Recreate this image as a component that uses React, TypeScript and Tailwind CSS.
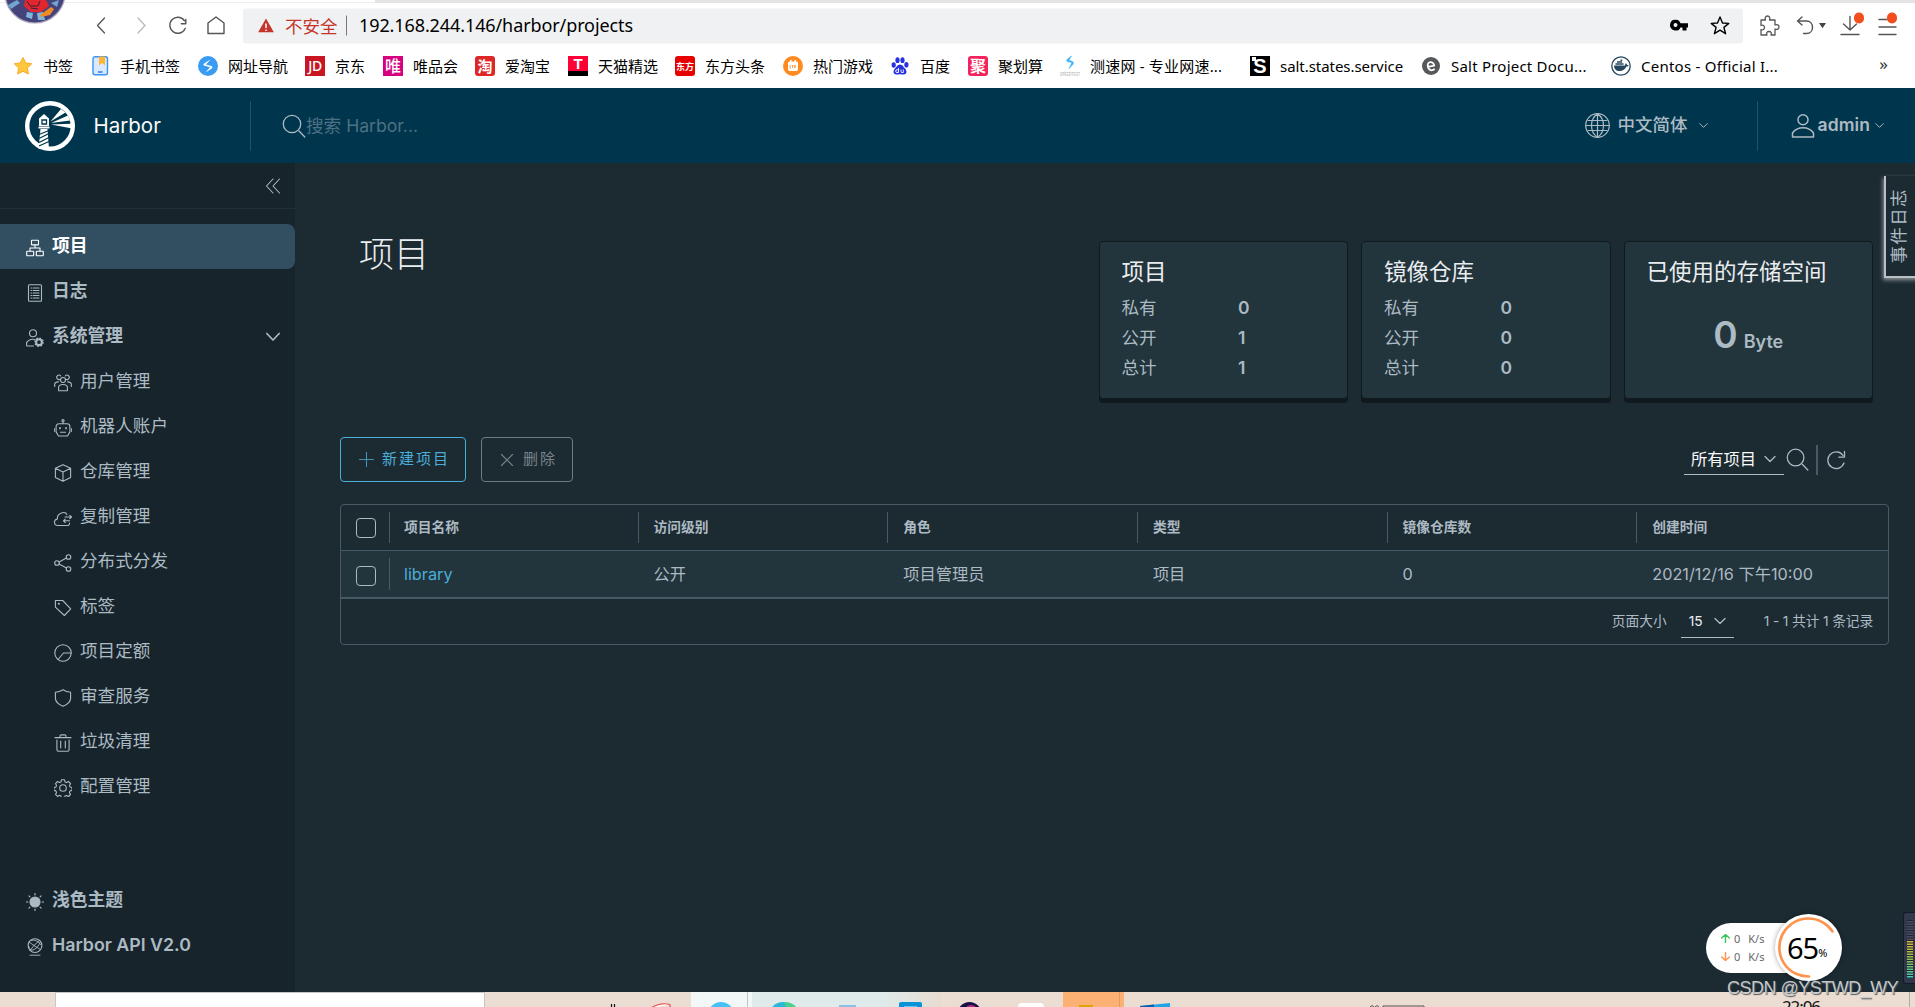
import type { ReactNode } from 'react';

/* ---------- icons ---------- */

function Line({ children, className, box = 18, width = 1.1 }: { children: ReactNode; className: string; box?: number; width?: number }) {
  return (
    <svg
      viewBox={`0 0 ${box} ${box}`}
      className={`shrink-0 ${className}`}
      fill="none"
      stroke="currentColor"
      strokeWidth={width}
      strokeLinejoin="round"
      strokeLinecap="round"
    >
      {children}
    </svg>
  );
}

const icons = {
  projects: (
    <>
      <rect x="5.5" y="1.3" width="7" height="4.6" rx="0.5" />
      <rect x="0.7" y="12.2" width="7" height="4.6" rx="0.5" />
      <rect x="10.3" y="12.2" width="7" height="4.6" rx="0.5" />
      <path d="M9 6v3M4 12V9h10v3" />
    </>
  ),
  logs: (
    <>
      <rect x="2.5" y="0.7" width="13" height="16.6" rx="1" />
      <path d="M5 4h.6M7.2 4h5.8M5 6.5h.6M7.2 6.5h5.8M5 9h.6M7.2 9h5.8M5 11.5h.6M7.2 11.5h5.8M5 14h.6M7.2 14h5.8" strokeWidth="1.2" />
    </>
  ),
  admin: (
    <>
      <circle cx="7" cy="4.2" r="3.5" />
      <path d="M7.5 17H1.2a.6.6 0 0 1-.6-.6v-2.8C2 11.4 4.3 10.2 7 10.2c.8 0 1.5.1 2 .3" />
      <circle cx="13" cy="13.2" r="2.9" strokeWidth="2.1" />
      <circle cx="13" cy="13.2" r="4.2" strokeWidth="1.3" strokeDasharray="1.5 1.8" strokeLinecap="butt" />
    </>
  ),
  users: (
    <>
      <circle cx="9" cy="6" r="2.5" />
      <path d="M4.6 16.8v-3.3c0-1.9 2-3 4.4-3s4.4 1.1 4.4 3v3.3z" />
      <path d="M5.7 5.4A2.2 2.2 0 1 1 6.7 2M12.3 5.4A2.2 2.2 0 1 0 11.3 2M.7 12.5v-2.2c0-1.3 1.3-2.2 3.6-2.4M17.3 12.5v-2.2c0-1.3-1.3-2.2-3.6-2.4" />
    </>
  ),
  robot: (
    <>
      <path d="M9 4.5V3M5 4.8h8c1.8 0 2.9 1.1 2.9 2.9v5.2L13.5 17h-9l-2.4-4.1V7.7C2.1 5.9 3.2 4.8 5 4.8zM.3 9.5v3M17.7 9.5v3M6.5 13.3h5" />
      <circle cx="9" cy="1.7" r="1.1" />
      <path d="M6 8.8v.6M12 8.8v.6" strokeWidth="1.7" />
    </>
  ),
  box: <path d="M9 .8l7.6 3.5v9.2L9 17.2l-7.6-3.7V4.3zM1.4 4.3L9 8l7.6-3.7M9 8v9.2" />,
  replicate: (
    <>
      <path d="M15.5 14c.2 1.500-.8 2.500-2.300 2.500H4c-4.700 0-4.500-6-.7-6.400C2.9 3.300 11.600 2 12.900 5.600" />
      <path d="M11 8h6.500M15.800 6.300l1.700 1.700-1.700 1.700M15.600 11.800H9.500M11.200 10.100l-1.700 1.700 1.700 1.700" />
    </>
  ),
  share: (
    <>
      <circle cx="3" cy="9" r="2.3" />
      <circle cx="14.5" cy="3" r="2.3" />
      <circle cx="14.5" cy="15" r="2.3" />
      <path d="M5 8l7.5-4M5 10l7.5 4" />
    </>
  ),
  tag: (
    <>
      <path d="M1.4 1.5h7.3l8 8.4-6.3 6.6-9-8.3z" />
      <circle cx="4.8" cy="4.8" r=".5" />
    </>
  ),
  quota: (
    <>
      <circle cx="9" cy="9" r="8.2" />
      <path d="M4 15.5L9.5 9H17" />
    </>
  ),
  shield: <path d="M9 .8c2.3 1.6 4.8 2.4 7.6 2.5v6c0 3.7-3 6.1-7.6 8-4.6-1.9-7.6-4.3-7.6-8v-6C4.2 3.2 6.7 2.4 9 .8z" />,
  trash: <path d="M1 3.6h16M6 3.4V2.2C6 1.3 6.5.9 7.3.9h3.4c.8 0 1.3.4 1.3 1.3v1.2M2.9 6v9.5c0 1 .6 1.7 1.6 1.7h9c1 0 1.6-.7 1.6-1.7V6M6.7 7v7M11.3 7v7" />,
  gear: (
    <>
      <circle cx="9" cy="9" r="3.3" />
      <path d="M7.5.8h3l.6 2.2 1.4.6 2-1.1 2.1 2.1-1.1 2 .6 1.4 1.9.6v2.8l-2 .6-.6 1.5 1.1 2-2 2-2.1-1.1-1.4.6-.5 1.9h-3l-.6-2-1.4-.6-2 1.1-2-2 1-2-.6-1.5-2-.6V8.6l2-.6.6-1.4-1-2 2-2.1 2 1.1 1.4-.6z" />
    </>
  ),
  sun: (
    <>
      <circle cx="9" cy="9" r="5" fill="currentColor" />
      <path d="M9 .3v1.6M9 16.1v1.6M.3 9h1.6M16.1 9h1.6M2.9 2.9l1 1M14.1 14.1l1 1M15.1 2.9l-1 1M3.9 14.1l-1 1" />
    </>
  ),
  api: (
    <>
      <circle cx="9" cy="7.6" r="6.9" />
      <path d="M4 17.2h10M3 4l5 3.5 5.5-5M8 7.5l-4 5M8 7.5l6.5 4M3 8.5C2.5 11 5 13 8 11.5s5-4 6-7M5 2.5c3-1 7 0 9.5 4" strokeWidth=".9" />
    </>
  ),
};

const Chevron = ({ className }: { className: string }) => (
  <Line className={className} box={12} width={1.3}>
    <path d="M1 3.5l5 5 5-5" />
  </Line>
);

const SearchIcon = ({ className }: { className: string }) => (
  <Line className={className} box={24} width={1.3}>
    <circle cx="10" cy="10" r="8.7" />
    <path d="M17 17l5.8 6" />
  </Line>
);

/* ---------- browser ---------- */

const square = 'flex items-center justify-center w-5 h-5 shrink-0 text-white leading-none';

const bookmarks: { label: string; width: string; text?: string; icon: ReactNode }[] = [
  {
    label: '书签',
    width: 'w-[77px]',
    icon: (
      <svg viewBox="0 0 20 20" className="w-5 h-5">
        <path d="M10 1.5l2.7 5.4 6 .9-4.3 4.2 1 6L10 15.2 4.6 18l1-6L1.3 7.8l6-.9z" fill="#ffc83c" stroke="#f9a825" strokeWidth="1" strokeLinejoin="round" />
      </svg>
    ),
  },
  {
    label: '手机书签',
    width: 'w-[108px]',
    icon: (
      <svg viewBox="0 0 20 20" className="w-5 h-5">
        <rect x="3" y=".8" width="14.5" height="18" rx="2" fill="#d9e9ff" stroke="#3b93f5" strokeWidth="1.4" />
        <path d="M9 .5h6v9l-3-2.5L9 9.500z" fill="#ffb62e" />
        <path d="M8 16h4.5" stroke="#1a73e8" strokeWidth="1.4" />
      </svg>
    ),
  },
  {
    label: '网址导航',
    width: 'w-[107px]',
    icon: (
      <svg viewBox="0 0 20 20" className="w-5 h-5">
        <circle cx="10" cy="10" r="10" fill="#3a9bf4" />
        <path d="M12.5 3.5L6 7.5c-1 .8-.6 2 .6 2.3l5.4 1.4L7.5 16.5l6.3-4c1-.8.7-2-.5-2.4L8 8.6z" fill="#fff" />
      </svg>
    ),
  },
  { label: '京东', width: 'w-[78px]', icon: <span className={`${square} bg-[#c91623] text-[14px] font-medium tracking-[-0.5px]`}>JD</span> },
  { label: '唯品会', width: 'w-[92px]', icon: <span className={`${square} bg-[#d6007f] text-[16px] font-medium`}>唯</span> },
  { label: '爱淘宝', width: 'w-[93px]', icon: <span className={`${square} bg-[#dd2727] rounded-[3px] text-[15px] font-bold`}>淘</span> },
  {
    label: '天猫精选',
    width: 'w-[107px]',
    icon: <span className={`${square} bg-[#ff0036] border-b-[5px] border-black font-['Liberation_Sans',sans-serif] text-[15px] font-bold`}>T</span>,
  },
  { label: '东方头条', width: 'w-[108px]', icon: <span className={`${square} bg-[#e60000] rounded-[3px] text-[9px] font-bold`}>东方</span> },
  {
    label: '热门游戏',
    width: 'w-[107px]',
    icon: (
      <svg viewBox="0 0 20 20" className="w-5 h-5">
        <circle cx="10" cy="10" r="10" fill="#ff8a1f" />
        <path d="M5 7.5C5 6 6 5.5 7 5.5V4h1.5v1.5h3V4H13v1.5c1 0 2 .5 2 2V13c0 1.5-1 2-2 2H7c-1 0-2-.5-2-2z" fill="#fff" />
        <path d="M7 9v3h1M9.5 9v3M11 9l.8 3 .8-3" stroke="#ff8a1f" strokeWidth=".8" fill="none" />
      </svg>
    ),
  },
  {
    label: '百度',
    width: 'w-[78px]',
    icon: (
      <svg viewBox="0 0 20 20" className="w-5 h-5" fill="#2932e1">
        <ellipse cx="3.7" cy="9" rx="2.1" ry="2.8" />
        <ellipse cx="7.5" cy="4.2" rx="2.1" ry="2.9" />
        <ellipse cx="12.5" cy="4.2" rx="2.1" ry="2.9" />
        <ellipse cx="16.4" cy="8.8" rx="2.1" ry="2.8" />
        <path d="M10 8.5c2.5 0 3.2 2.3 5 4s2.5 6-1.5 6c-1.5 0-2.3-.3-3.5-.3s-2 .3-3.5.3c-4 0-3.3-4.3-1.5-6s2.5-4 5-4z" />
        <path d="M8.5 12v4.5H7a1.3 1.3 0 0 1 0-2.7h1.5M11 13.5v2.2c0 .6.4.8 1 .8h1.3v-3" stroke="#fff" strokeWidth=".9" fill="none" />
      </svg>
    ),
  },
  { label: '聚划算', width: 'w-[92px]', icon: <span className={`${square} bg-[#f4235c] rounded-[3px] text-[16px] font-bold`}>聚</span> },
  {
    label: '测速网 - 专业网速...',
    width: 'w-[190px]',
    text: 'tracking-[0.2px]',
    icon: (
      <svg viewBox="0 0 20 20" className="w-5 h-5 overflow-visible">
        <path d="M11.5 0L7 3.5c-.8 1 0 2 1.3 2.3L12 6.5 9 12.5l3.8-4c.8-1 .8-2.5-.5-3L8.8 4.3z" fill="#39b2f5" stroke="#39b2f5" strokeWidth=".6" />
        <text x="0" y="19.5" fontSize="5.5" fontWeight="bold" textLength="20" lengthAdjust="spacingAndGlyphs" fill="#c4c4c4" fontFamily="Liberation Sans">SPEEDTEST</text>
      </svg>
    ),
  },
  {
    label: 'salt.states.service',
    width: 'w-[171px]',
    text: 'tracking-[-0.05px]',
    icon: (
      <span className={`${square} relative bg-black font-['Liberation_Sans',sans-serif] text-[20px] font-bold`}>
        S<i className="absolute left-[2px] top-[1px] w-1 h-1 bg-white" />
      </span>
    ),
  },
  {
    label: 'Salt Project Docu...',
    width: 'w-[190px]',
    text: 'tracking-[0.22px]',
    icon: (
      <svg viewBox="0 0 20 20" className="w-5 h-5">
        <circle cx="10" cy="10" r="9" fill="#57585a" />
        <path d="M6.8 10.3h6.4c.6-5-6.400-6-6.400-.6 0 5 3.500 5.300 6.200 4" transform="rotate(-12 10 10)" stroke="#fff" strokeWidth="1.8" fill="none" />
      </svg>
    ),
  },
  {
    label: 'Centos - Official I...',
    width: 'w-[200px]',
    text: 'tracking-[0.24px]',
    icon: (
      <svg viewBox="0 0 20 20" className="w-5 h-5">
        <circle cx="10" cy="10" r="9.2" fill="#fff" stroke="#27475c" strokeWidth="1.3" />
        <path d="M3 9.500h11c0-1 .2-1.800 1-2.300.8.6 1 1.2 1 1.9.6-.1 1.2 0 1.6.3-.3.9-1.2 1.2-2.2 1.2-1.3 3-3.500 4.400-6.900 4.400C5.200 15 3 13 3 9.500z" fill="#27475c" />
        <path d="M4.500 8h8M6 6h5M9.500 4.300h1.700" stroke="#27475c" strokeWidth="1.6" />
      </svg>
    ),
  },
];

function Browser() {
  return (
    <div className="relative h-[88px] shrink-0 overflow-hidden bg-white text-black font-['Noto_Sans','Noto_Sans_CJK_SC',sans-serif]">
      <div className="flex h-[3px]">
        <div className="w-[375px] border-b border-[#eee]" />
        <div className="flex-1 bg-[#e4e4e4]" />
      </div>
      {/* profile avatar hanging from the tab strip */}
      <svg viewBox="0 0 64 24" className="absolute left-[3px] top-0 w-16 h-6">
        <circle cx="32" cy="-7" r="30" fill="#45437c" stroke="#a9a8bd" strokeWidth="1.2" />
        <path d="M22 0h21l3 6-8 6H28l-7-6z" fill="#e3262e" />
        <path d="M24 1l3 5h8l2-5M28 8l7 1" stroke="#2a2540" strokeWidth="1" fill="none" />
        <path d="M24 12l6 1-1 6-6-2zM34 13l6-1 2 8-7 0z" fill="#7fb5d8" />
        <path d="M5 5l9-5 3 3-9 6z" fill="#6ea6cf" />
        <path d="M37 15l11-8 3 2-4 6-9 2z" fill="#f08a24" />
        <path d="M48 3l8-3-2 7z" fill="#6ea6cf" />
      </svg>

      <div className="flex h-10 items-center mt-[5px] -translate-y-[2.5px]">
        <div className="flex w-[243px] shrink-0 items-center text-[#555]">
          <Line className="ml-[92px] w-5 h-5" box={20} width={1.3}><path d="M12.5 2.5L5.5 10l7 7.5" /></Line>
          <Line className="ml-[20px] w-5 h-5 text-[#bbb]" box={20} width={1.3}><path d="M6 2.5l7 7.5-7 7.5" /></Line>
          <Line className="ml-[16px] w-5 h-5" box={20} width={1.4}><path d="M17.2 13A8 8 0 1 1 16.5 5.3M17.8 4v4.2h-4.5" /></Line>
          <Line className="ml-[18px] w-5 h-5" box={20} width={1.4}><path d="M2 18V7.5L10 1.5l8 6V18z" /></Line>
        </div>
        <div className="flex h-[35px] w-[1500px] shrink-0 items-center rounded-[3px] bg-[#f0f1f3]">
          <svg viewBox="0 0 16 14" className="ml-[15px] w-4 h-[14px]">
            <path d="M8 0l8 14H0z" fill="#c5352b" />
            <path d="M8 5v4.5M8 11v1.5" stroke="#fff" strokeWidth="1.5" />
          </svg>
          <span className="ml-[11px] text-[17.5px] text-[#c5352b]">不安全</span>
          <i className="ml-[8px] h-5 w-[1.5px] bg-[#777]" />
          <span className="ml-3 text-[18px] tracking-[-0.1px] -translate-y-px">192.168.244.146/harbor/projects</span>
          <svg viewBox="0 0 18 12" className="ml-auto mr-[22px] w-[18px] h-3">
            <path d="M5.500 0a5.500 5.500 0 0 1 5 3.700H18v4.200h-1.500V11h-4V7.900h-2A5.500 5.500 0 1 1 5.500 0zm0 3.500a2 2 0 1 0 0 4 2 2 0 0 0 0-4z" />
          </svg>
          <Line className="mr-[13px] w-5 h-5 text-black" box={20} width={1.4}>
            <path d="M10 1.5l2.5 6 6.3.4-4.9 4 1.7 6.3L10 14.7l-5.600 3.500 1.700-6.300-4.900-4 6.300-.4z" />
          </Line>
        </div>
        <div className="flex items-center text-[#555]">
          <Line className="ml-[15px] w-[22px] h-[22px]" box={22} width={1.3}>
            <path d="M3 5.5h4.5C6.500 3.500 7.500 1.500 9.500 1.500s3 2 2 4H17v5c2-1 4 0 4 2s-2 3-4 2v6h-4c1-2 0-3.500-2-3.500s-3 1.500-2 3.500H3v-5.500c2 .8 3.500-.2 3.500-2s-1.500-3-3.500-2z" />
          </Line>
          <Line className="ml-[16px] w-5 h-5" box={20} width={1.4}><path d="M6 1.5L1.5 5.500 6 9.500M1.500 5.500h9c8 0 8 12.500 0 12.500H7.500" /></Line>
          <svg viewBox="0 0 8 6" className="ml-[3px] w-[7px] h-[6px]" fill="#444"><path d="M0 0h8L4 6z" /></svg>
          <div className="relative ml-[14px] h-[22px] w-[22px]">
            <Line className="h-[22px] w-[22px]" box={22} width={1.4}><path d="M10 2v13M3.500 9.500L10 15.500l6.500-6M1 20h18" /></Line>
            <i className="absolute left-[14px] -top-[2px] h-[11px] w-[10px] rounded-full bg-[#f24e1e]" />
          </div>
          <div className="relative ml-[16px] h-[22px] w-[22px]">
            <Line className="h-[22px] w-[22px]" box={22} width={1.4}><path d="M1 5h8M1 12.500h17M1 20h17" /></Line>
            <i className="absolute left-[9px] -top-[2px] h-[11px] w-[10px] rounded-full bg-[#f24e1e]" />
          </div>
        </div>
      </div>

      <div className="flex h-5 items-center mt-[8px] pl-[13px]">
        {bookmarks.map((b) => (
          <div key={b.label} className={`flex shrink-0 items-center gap-[10px] whitespace-nowrap text-[15px] ${b.width}`}>
            {b.icon}
            <span className={b.text}>{b.label}</span>
          </div>
        ))}
        <span className="ml-auto mr-[27px] text-[17px] text-[#333] -translate-y-[2px]">»</span>
      </div>
    </div>
  );
}

/* ---------- harbor ---------- */

function HarborLogo() {
  return (
    <svg viewBox="0 0 50 50" className="ml-[25px] h-[50px] w-[50px] shrink-0">
      <circle cx="25" cy="25" r="22.8" fill="none" stroke="#fff" strokeWidth="4.4" />
      <path d="M19 13l5 4.500V25H14v-7.500z" fill="#fff" />
      <path d="M17 19h4.500v4H17z" fill="none" stroke="#00364d" strokeWidth="1.3" />
      <path d="M15.500 28h7l1.500 20H13.500z" fill="#fff" />
      <path d="M14 33.500l10-4M14 37.500l10-5M14 41.500l10-5M14 45l11-5" stroke="#00364d" strokeWidth="1.3" />
      <path d="M13.500 26.500h11" stroke="#fff" strokeWidth="2" />
      <path d="M25.500 20.500L36 8l4.500 3.500zM26 22l17-7.500 2 5zM26 23.500l20-.8v4.500z" fill="#fff" />
    </svg>
  );
}

function Header() {
  return (
    <header className="flex h-[75px] shrink-0 items-center bg-[#00364d] text-[#acbac3]">
      <div className="flex w-[250px] items-center">
        <HarborLogo />
        <span className="ml-[18.5px] text-[20.5px] leading-[26px] text-[#fafafa]">Harbor</span>
      </div>
      <i className="h-[50px] w-px bg-[#24516a]" />
      <SearchIcon className="ml-[31px] h-6 w-6" />
      <span className="text-[17.6px] text-[#4d7083] translate-y-px">搜索 Harbor...</span>
      <Line className="ml-auto h-[25px] w-[25px]" box={25} width={1.2}>
        <circle cx="12.5" cy="12.5" r="11.8" />
        <path d="M12.5.7v23.600M3 7.500h19M.7 12.500h23.600M3 17.500h19M12.500.7C4.500 6 4.500 19 12.500 24.300M12.500.7c8 5.300 8 18.300 0 23.600" />
      </Line>
      <span className="ml-[7px] text-[17.5px] font-medium">中文简体</span>
      <Chevron className="ml-[12px] h-[9px] w-[9px]" />
      <i className="ml-[49px] h-[50px] w-px bg-[#24516a]" />
      <Line className="ml-[33px] h-[26px] w-6" box={24} width={1.5}>
        <circle cx="12" cy="5.8" r="5" />
        <path d="M1.5 23v-4C4 15.500 7.500 13.800 12 13.800s8 1.700 10.500 5.200v4z" />
      </Line>
      <span className="ml-[2px] text-[17.5px] font-semibold tracking-[0.1px]">admin</span>
      <Chevron className="ml-[5px] mr-[31px] h-[9px] w-[9px]" />
    </header>
  );
}

const subItems: [ReactNode, string][] = [
  [icons.users, '用户管理'],
  [icons.robot, '机器人账户'],
  [icons.box, '仓库管理'],
  [icons.replicate, '复制管理'],
  [icons.share, '分布式分发'],
  [icons.tag, '标签'],
  [icons.quota, '项目定额'],
  [icons.shield, '审查服务'],
  [icons.trash, '垃圾清理'],
  [icons.gear, '配置管理'],
];

function NavItem({ icon, label, active, sub, children }: { icon: ReactNode; label: string; active?: boolean; sub?: boolean; children?: ReactNode }) {
  return (
    <div
      className={`flex h-[45px] items-center ${sub ? 'pl-[54px] gap-2 text-[17.6px]' : 'pl-[26px] gap-[8px] text-[17.8px] font-semibold'} ${
        active ? 'bg-[#324f62] rounded-r-lg text-white' : ''
      }`}
    >
      <Line className="h-[18px] w-[18px] translate-y-px">{icon}</Line>
      <span>{label}</span>
      {children}
    </div>
  );
}

function Sidebar() {
  return (
    <aside className="flex w-[295px] shrink-0 flex-col bg-[#17242b] text-[#acbac3]">
      <div className="flex h-[46px] items-center justify-end border-b border-[#223139] pr-[14px]">
        <Line className="h-4 w-4" box={16}><path d="M8 1L1.5 8 8 15M14.500 1L8 8l6.500 7" /></Line>
      </div>
      <nav className="mt-[15px]">
        <NavItem icon={icons.projects} label="项目" active />
        <NavItem icon={icons.logs} label="日志" />
        <NavItem icon={icons.admin} label="系统管理">
          <Line className="ml-auto mr-[15px] h-[14px] w-[14px]" box={14} width={1.7}><path d="M.8 3.500L7 10l6.200-6.500" /></Line>
        </NavItem>
        {subItems.map(([icon, label]) => (
          <NavItem key={label} icon={icon} label={label} sub />
        ))}
      </nav>
      <div className="mt-auto mb-[24px]">
        <NavItem icon={icons.sun} label="浅色主题" />
        <NavItem icon={icons.api} label="Harbor API V2.0" />
      </div>
    </aside>
  );
}

function Card({ title, rows, children }: { title: string; rows?: [string, number][]; children?: ReactNode }) {
  return (
    <div className="h-[158px] w-[249.5px] rounded-[4px] border border-[#10191e] bg-[#22343c] px-[22px] pt-[15px] shadow-[0_4px_0_#10191e]">
      <h2 className="whitespace-nowrap text-[22.5px] leading-[30px] text-[#eaedf0]">{title}</h2>
      {rows?.map(([label, n]) => (
        <div key={label} className="flex h-[30px] items-center text-[17.5px] first-of-type:mt-[6px]">
          <span className="w-[116.5px]">{label}</span>
          <span className="font-semibold">{n}</span>
        </div>
      ))}
      {children}
    </div>
  );
}

const columns = [
  { head: '项目名称', cell: 'library' },
  { head: '访问级别', cell: '公开' },
  { head: '角色', cell: '项目管理员' },
  { head: '类型', cell: '项目' },
  { head: '镜像仓库数', cell: '0' },
  { head: '创建时间', cell: '2021/12/16 下午10:00' },
];

function Table() {
  return (
    <section className="mt-[22px] h-[141px] w-[1549px] rounded-[4px] border border-[#495a67]">
      <div className="flex h-[46px] items-center border-b border-[#495a67] text-[13.75px] font-semibold">
        <div className="flex w-[48px] shrink-0 justify-center pl-px">
          <i className="h-[20px] w-[20px] rounded-[4px] border border-[#acbac3]" />
        </div>
        {columns.map((c) => (
          <div
            key={c.head}
            className="flex h-[31px] w-[249.7px] shrink-0 items-center border-l border-[#495a67] pl-[15px] nth-2:w-[248.5px] nth-2:pl-[14px] last:w-auto"
          >
            {c.head}
          </div>
        ))}
      </div>
      <div className="flex h-[48px] items-center border-b-2 border-[#495a67] bg-[#22343c] text-[16.25px]">
        <div className="flex w-[48px] shrink-0 justify-center pl-px">
          <i className="h-[20px] w-[20px] translate-y-[2px] rounded-[4px] border border-[#acbac3]" />
        </div>
        {columns.map((c, i) => (
          <div
            key={c.head}
            className={`flex h-8 w-[249.7px] shrink-0 items-center whitespace-nowrap border-l pl-[15px] nth-2:w-[248.5px] nth-2:pl-[14px] last:w-auto ${
              i === 0 ? 'border-[#495a67] text-[#4aaed9]' : 'border-transparent'
            }`}
          >
            {c.cell}
          </div>
        ))}
      </div>
      <div className="flex h-[45px] items-center justify-end pr-[15px] text-[13.75px]">
        <span>页面大小</span>
        <div className="ml-[14px] mr-[30px] flex h-8 w-[53px] items-center border-b border-[#acbac3] pl-2 text-[#eaedf0]">
          15
          <Chevron className="ml-auto mr-2 h-3 w-3 text-[#acbac3]" />
        </div>
        <span className="whitespace-pre tracking-[-0.14px]">1 - 1 共计 1 条记录</span>
      </div>
    </section>
  );
}

function Main() {
  return (
    <main className="flex-1 bg-[#1c2a32] pl-[45px] pt-[78px] text-[#acbac3]">
      <div className="flex h-[162px] items-start pl-[19px]">
        <h1 className="-mt-[7px] text-[35px] font-light leading-[40px] text-[#eaedf0]">项目</h1>
        <div className="ml-auto mr-[42px] flex gap-[13px]">
          <Card title="项目" rows={[['私有', 0], ['公开', 1], ['总计', 1]]} />
          <Card title="镜像仓库" rows={[['私有', 0], ['公开', 0], ['总计', 0]]} />
          <Card title="已使用的存储空间">
            <div className="mt-[26px] flex items-baseline justify-center gap-[6px] leading-[44px]">
              <span className="text-[37px] font-semibold">0</span>
              <span className="text-[18px] font-semibold">Byte</span>
            </div>
          </Card>
        </div>
      </div>

      <div className="mt-[34px] flex h-[45px] items-center text-[15px] tracking-[2px]">
        <button className="flex h-[45px] w-[126px] items-center rounded-[4px] border border-[#4aaed9] pl-[18px] text-[#4aaed9]">
          <Line className="mr-[8px] h-[15px] w-[15px] opacity-80" box={15}><path d="M7.5.5v14M.5 7.500h14" /></Line>
          新建项目
        </button>
        <button className="ml-[15px] flex h-[45px] w-[92px] items-center rounded-[4px] border border-[#6d7a82] pl-[18px] text-[#79848a]">
          <Line className="mr-[9px] h-[14px] w-[14px]" box={14}><path d="M1.5 1.5l11 11M12.5 1.5l-11 11" /></Line>
          删除
        </button>
        <div className="ml-auto mr-[69px] flex items-center text-[16.25px] tracking-normal">
          <div className="flex h-[30px] w-[100px] items-center border-b border-[#acbac3] pl-[7px] text-[#fafafa]">
            所有项目
            <Chevron className="ml-auto mr-2 h-3 w-3 text-[#acbac3]" />
          </div>
          <SearchIcon className="ml-[2px] h-[23px] w-[23px]" />
          <i className="ml-[7px] mr-[8px] h-[30px] w-[2px] bg-[#495a67]" />
          <Line className="h-5 w-5" box={20} width={1.3}><path d="M18 13A8.3 8.3 0 1 1 17 5.500M18.500 1.500v5.700h-5.700" /></Line>
        </div>
      </div>

      <Table />
    </main>
  );
}

/* ---------- desktop ---------- */

function SpeedWidget() {
  return (
    <div className="absolute left-[1706px] top-[914px] flex h-[67px] w-[136px] items-center font-['Noto_Sans',sans-serif]">
      <div className="flex h-[50px] w-[110px] flex-col justify-center rounded-l-full bg-white pl-[15px] text-[11px] leading-[18px] text-[#666]">
        <div className="flex items-center">
          <Line className="mr-1 h-[9px] w-[9px] text-[#35c759]" box={9} width={1.4}><path d="M4.5 8.500v-8M.7 4l3.800-3.500L8.300 4" /></Line>
          0<span className="ml-[8px]">K/s</span>
        </div>
        <div className="flex items-center">
          <Line className="mr-1 h-[9px] w-[9px] text-[#ff924c]" box={9} width={1.4}><path d="M4.5.5v8M.7 5l3.800 3.500L8.300 5" /></Line>
          0<span className="ml-[8px]">K/s</span>
        </div>
      </div>
      <div className="absolute right-0 flex h-[67px] w-[67px] items-center rounded-full bg-white pl-[12px] text-black shadow-[0_0_5px_rgba(0,0,0,0.35)]">
        <svg viewBox="0 0 67 67" className="absolute inset-0" fill="none">
          <path d="M34 62.500A29 29 0 1 1 57.500 17.500" stroke="#ff924c" strokeWidth="2.6" strokeLinecap="round" />
        </svg>
        <span className="text-[29px] tracking-[-1px]">65</span>
        <span className="mt-[11px] text-[11px]">%</span>
      </div>
    </div>
  );
}

function LevelMeter() {
  return (
    <div className="absolute left-[1903px] top-[912px] h-[72px] w-3 rounded-l-[3px] border border-r-0 border-[#151a2b] bg-[#32374c]">
      <svg viewBox="0 0 6 58" className="ml-[3px] mt-[7px] h-[58px] w-[6px]">
        <defs>
          <linearGradient id="level" x1="0" y1="0" x2="0" y2="1">
            <stop offset="0" stopColor="#e0b63a" />
            <stop offset="0.5" stopColor="#94c24b" />
            <stop offset="1" stopColor="#3fd0b8" />
          </linearGradient>
        </defs>
        <rect width="6" height="20" fill="#4a4d5c" />
        <rect y="20" width="6" height="38" fill="url(#level)" />
        <path d="M3 0v58" stroke="#1d2233" strokeWidth="6" strokeDasharray="1 1.5" />
      </svg>
    </div>
  );
}

function Taskbar() {
  return (
    <footer className="flex h-[15px] shrink-0 overflow-hidden bg-[#ebddd1]">
      <svg viewBox="0 0 1915 15" className="h-[15px] w-[1915px]">
        <defs>
          <linearGradient id="sheen">
            <stop offset="0" stopColor="#dfeaea" />
            <stop offset="0.7" stopColor="#dfeaea" />
            <stop offset="1" stopColor="#e8dcd0" />
          </linearGradient>
        </defs>
        <rect x="55.5" y=".5" width="429" height="20" fill="#fff" stroke="#c8c4c0" />
        <path d="M611.5 12v3M614.5 12v3" stroke="#111" strokeWidth="1.2" />
        <path d="M651 16q9-6 19-3.5M670 15v-2.5" stroke="#e84b4b" strokeWidth="1.2" fill="#fff" />
        <rect x="751" width="190" height="15" fill="url(#sheen)" />
        <rect x="691" width="61" height="15" fill="#f2f7f7" />
        <path d="M747.5 0v15" stroke="#b9c8c8" />
        <circle cx="721" cy="23" r="13" fill="#45c1f5" />
        <circle cx="783" cy="24" r="14" fill="#2bb8d8" />
        <path d="M784 10q8 0 12 5h-10z" fill="#4bd08b" />
        <rect x="839" y="13" width="17" height="3" fill="#8cc0e2" />
        <rect x="899" y="10" width="23" height="10" rx="2" fill="#0a93d8" />
        <path d="M904 14.5h13" stroke="#6ac6f0" />
        <circle cx="969.5" cy="22" r="12" fill="#17104a" />
        <circle cx="971" cy="20" r="7" fill="#b03078" />
        <rect x="1018" y="11" width="26" height="10" rx="4" fill="#fff" />
        <rect x="1063" width="61" height="15" fill="#fbb074" />
        <path d="M1119.5 0v15" stroke="#e89a5c" />
        <rect x="1079" y="13" width="14" height="4" rx="1" fill="#dfa300" />
        <path d="M1140 14l30-3v5h-30z" fill="#22a5e6" />
        <path d="M1140 14l14-1.5V16h-14z" fill="#0f5eb0" />
        <path d="M1370 15q2-3 4 0M1375 15q2-3 4 0M1383 15v-1h41v1" stroke="#555" fill="none" />
        <path d="M1909.5 0v15" stroke="#b5aaa0" />
        <text x="1782" y="21" fontSize="17" textLength="39" fontFamily="Noto Sans" fill="#111">22:06</text>
      </svg>
    </footer>
  );
}

export default function App() {
  return (
    <div className="relative flex h-[1007px] w-[1915px] flex-col overflow-hidden bg-[#1c2a32] font-['Inter','Noto_Sans_CJK_SC',sans-serif]">
      <Browser />
      <Header />
      <div className="flex h-[829px] shrink-0">
        <Sidebar />
        <Main />
      </div>
      <Taskbar />

      <div className="absolute left-[1884px] top-[176px] flex h-[102px] w-10 border-b-2 border-l-2 border-[#b9c0c4] bg-[#1c2a32] shadow-[-1px_2px_4px_rgba(255,255,255,0.5)]">
        <span className="mb-3 self-end rotate-180 whitespace-nowrap text-[17.5px] leading-[25px] tracking-[1.4px] text-[#acbac3] [text-orientation:sideways] [writing-mode:vertical-rl]">
          事件日志
        </span>
      </div>
      <SpeedWidget />
      <LevelMeter />
      <span className="absolute left-[1727px] top-[976px] whitespace-nowrap font-['Liberation_Sans',sans-serif] text-[18px] leading-[24px] tracking-[-0.5px] text-[#c3c8cb] [text-shadow:1px_1px_1px_#555]">
        CSDN @YSTWD_WY
      </span>
    </div>
  );
}
